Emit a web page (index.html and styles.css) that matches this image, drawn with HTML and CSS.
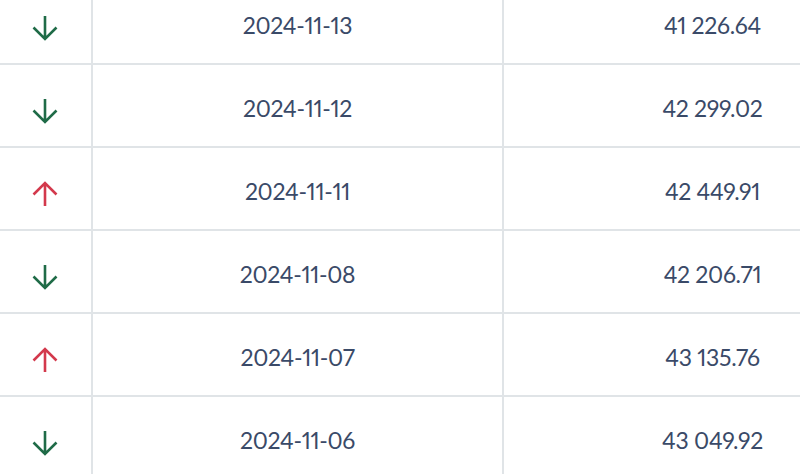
FILE: index.html
```html
<!DOCTYPE html>
<html lang="en">
<head>
<meta charset="utf-8">
<link rel="stylesheet" href="styles.css">
</head>
<body>
<table class="quotes">
  <tbody>
    <tr>
      <td class="dir"><svg class="arrow down" viewBox="0 0 26 26"><path d="M13 1V24M1.5 12.5L13 24L24.5 12.5"/></svg></td>
      <td class="date">2024-11-13</td>
      <td class="val">41 226.64</td>
    </tr>
    <tr>
      <td class="dir"><svg class="arrow down" viewBox="0 0 26 26"><path d="M13 1V24M1.5 12.5L13 24L24.5 12.5"/></svg></td>
      <td class="date">2024-11-12</td>
      <td class="val">42 299.02</td>
    </tr>
    <tr>
      <td class="dir"><svg class="arrow up" viewBox="0 0 26 26"><path d="M13 25V2M1.5 13.5L13 2L24.5 13.5"/></svg></td>
      <td class="date">2024-11-11</td>
      <td class="val">42 449.91</td>
    </tr>
    <tr>
      <td class="dir"><svg class="arrow down" viewBox="0 0 26 26"><path d="M13 1V24M1.5 12.5L13 24L24.5 12.5"/></svg></td>
      <td class="date">2024-11-08</td>
      <td class="val">42 206.71</td>
    </tr>
    <tr>
      <td class="dir"><svg class="arrow up" viewBox="0 0 26 26"><path d="M13 25V2M1.5 13.5L13 2L24.5 13.5"/></svg></td>
      <td class="date">2024-11-07</td>
      <td class="val">43 135.76</td>
    </tr>
    <tr>
      <td class="dir"><svg class="arrow down" viewBox="0 0 26 26"><path d="M13 1V24M1.5 12.5L13 24L24.5 12.5"/></svg></td>
      <td class="date">2024-11-06</td>
      <td class="val">43 049.92</td>
    </tr>
  </tbody>
</table>
</body>
</html>
```
FILE: styles.css
```css
html, body {
  margin: 0;
  padding: 0;
  background: #ffffff;
  overflow: hidden;
}
body {
  width: 800px;
  height: 474px;
  font-family: "Lato", "Open Sans", sans-serif;
  color: #3a4a68;
}
.quotes {
  border-collapse: collapse;
  width: 921px;
  margin-top: -19px;
  table-layout: fixed;
}
.quotes td {
  height: 83px;
  padding: 5px 0 0 0;
  box-sizing: border-box;
  border-bottom: 2px solid #e0e4e7;
  vertical-align: middle;
  font-size: 23px;
  font-variant-numeric: proportional-nums;
  letter-spacing: -0.3px;
  text-align: center;
}
.quotes td + td {
  border-left: 2px solid #e0e4e7;
}
.quotes td.dir {
  width: 92px;
  padding: 11px 2px 0 0;
}
.date {
  width: 411px;
}
.arrow {
  display: block;
  margin: 0 auto;
  width: 26px;
  height: 26px;
  fill: none;
  stroke-width: 2.6;
}
.arrow.down {
  stroke: #1f6b47;
}
.arrow.up {
  stroke: #d3394c;
}
```
